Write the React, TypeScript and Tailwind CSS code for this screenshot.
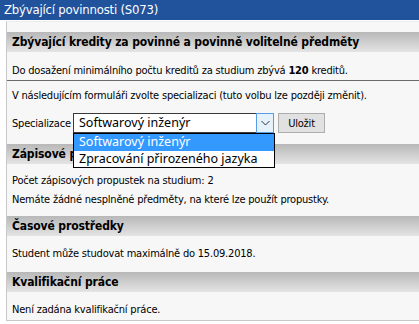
import React from "react";

const F = { fontFamily: '"DejaVu Sans Condensed", "DejaVu Sans", sans-serif' };
const S = { fontFamily: '"Noto Sans", "Open Sans", sans-serif' };

function Header({ children }: { children: React.ReactNode }) {
  return (
    <div className="h-[20px] bg-gradient-to-b from-[#b8b8b8] to-[#e4e4e4] px-[5px] text-[12px] font-bold leading-[20px] tracking-[-0.12px] text-black">
      {children}
    </div>
  );
}

export default function App() {
  return (
    <div className="relative h-[324px] w-[419px] overflow-hidden bg-white text-black" style={F}>
      <div className="h-[20px] bg-[#21529c] pl-[4px] text-[13px] leading-[20px] tracking-[-0.2px] text-white">
        Zbývající povinnosti (S073)
      </div>
      <div className="ml-[6px] mt-[1px] border-b border-l border-t border-[#c9c9c9] border-t-[#ececec] bg-[#f7f7f7] pb-[1px] pt-[10px] text-[11px] leading-[19px] tracking-[-0.2px]">
        <Header>Zbývající kredity za povinné a povinně volitelné předměty</Header>
        <div className="border-b border-[#6b6b6b] px-[5px] pt-[9px]">
          Do dosažení minimálního počtu kreditů za studium zbývá <b>120</b> kreditů.
        </div>
        <div className="px-[5px] pt-[5px]">
          V následujícím formuláři zvolte specializaci (tuto volbu lze později změnit).
        </div>
        <div className="mt-[8px] flex h-[20px] items-center px-[5px]">
          <span className="w-[61px] shrink-0 whitespace-nowrap">Specializace</span>
          <div className="relative h-[20px] w-[201px] shrink-0 border border-[#3a3a3a] bg-white tracking-normal">
            <div className="pl-[5px] text-[12.5px] leading-[18px]" style={S}>
              Softwarový inženýr
            </div>
            <div className="absolute -right-[1px] -top-[1px] flex h-[20px] w-[18px] items-center justify-center border border-[#569de5] bg-[#e5f1fb]">
              <svg width="9" height="6" viewBox="0 0 9 6">
                <path d="M0.5 1 L4.5 5 L8.5 1" fill="none" stroke="#333" strokeWidth="1" />
              </svg>
            </div>
            <div
              className="absolute -left-[1px] top-[19px] z-10 w-[202px] border border-black bg-white text-[12.5px] leading-[16px]"
              style={S}
            >
              <div className="h-[17px] bg-[#3399ff] pl-[5px] text-white">Softwarový inženýr</div>
              <div className="h-[16px] pl-[5px]">Zpracování přirozeného jazyka</div>
            </div>
          </div>
          <div className="ml-[4px] flex h-[20px] w-[47px] shrink-0 items-center justify-center border border-[#adadad] bg-[#e1e1e1]">
            Uložit
          </div>
        </div>
        <div className="mt-[11px]">
          <Header>Zápisové propustky</Header>
        </div>
        <div className="px-[5px] pb-[7px] pt-[7px]">
          <div>Počet zápisových propustek na studium: 2</div>
          <div>Nemáte žádné nesplněné předměty, na které lze použít propustky.</div>
        </div>
        <Header>Časové prostředky</Header>
        <div className="px-[5px] pb-[9px] pt-[8px]">Student může studovat maximálně do 15.09.2018.</div>
        <Header>Kvalifikační práce</Header>
        <div className="px-[5px] pt-[8px]">Není zadána kvalifikační práce.</div>
      </div>
    </div>
  );
}
